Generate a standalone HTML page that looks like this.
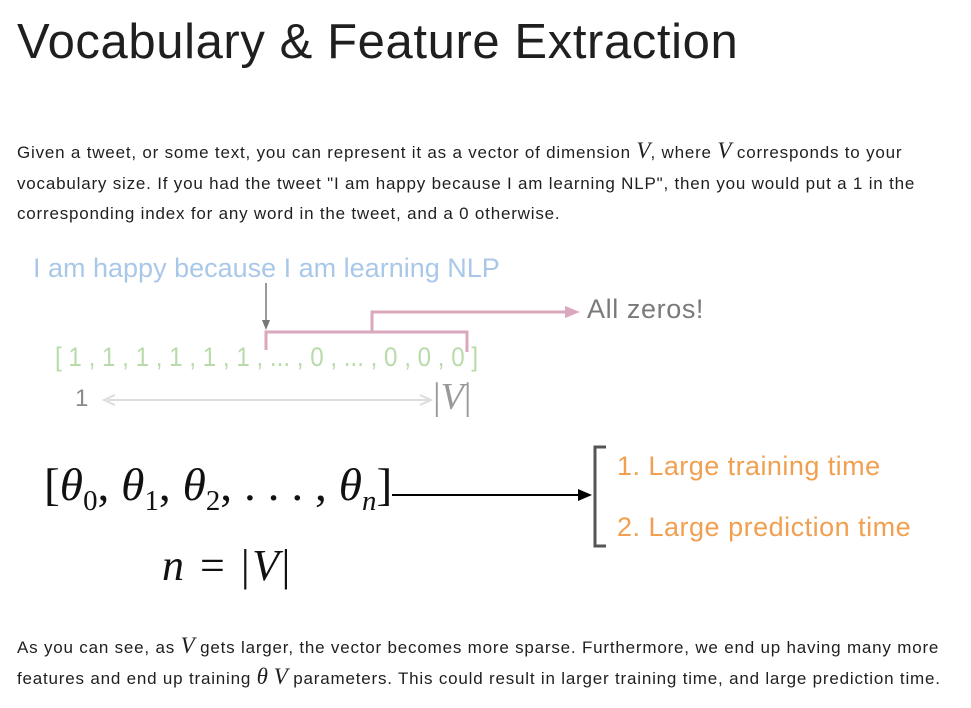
<!DOCTYPE html>
<html><head><meta charset="utf-8"><style>
body{margin:0;width:971px;height:708px;background:#fff;position:relative;overflow:hidden;font-family:"Liberation Sans",sans-serif;color:#1f1f1f}
.a{position:absolute;white-space:nowrap}
h1{position:absolute;left:17px;top:14px;margin:0;font-weight:400;font-size:49px;color:#1f1f1f;letter-spacing:0.6px}
.p{position:absolute;left:17px;font-size:17px;letter-spacing:0.8px;line-height:30.5px;color:#1f1f1f}
i.m{font-family:"Liberation Serif",serif;font-size:23px;font-style:italic;line-height:0;letter-spacing:0}
.s{font-family:"Liberation Serif",serif}
</style></head><body>
<h1>Vocabulary &amp; Feature Extraction</h1>
<div class="p" style="top:138px">Given a tweet, or some text, you can represent it as a vector of dimension <i class="m">V</i>, where <i class="m">V</i> corresponds to your<br>vocabulary size. If you had the tweet "I am happy because I am learning NLP", then you would put a 1 in the<br>corresponding index for any word in the tweet, and a 0 otherwise.</div>

<div class="a" style="left:33px;top:253px;font-size:27px;color:#a9c8e8;letter-spacing:0px">I am happy because I am learning NLP</div>
<div class="a" style="left:587px;top:294px;font-size:27px;color:#7a7a7a;letter-spacing:0.6px">All zeros!</div>
<div class="a" style="left:55px;top:342px;font-size:27px;color:#b9dbaa;transform:scaleX(0.895);transform-origin:0 0">[ 1 , 1 , 1 , 1 , 1 , 1 , ... , 0 , ... , 0 , 0 , 0 ]</div>
<div class="a" style="left:75px;top:385px;font-size:24px;color:#8a8a8a">1</div>
<div class="a s" style="left:433px;top:375px;font-size:38px;color:#999"><span>|</span><i>V</i><span>|</span></div>
<svg class="a" style="left:0;top:0" width="971" height="708">
<line x1="266" y1="283" x2="266" y2="322" stroke="#777" stroke-width="1.5"/>
<path d="M262 320 L266 330 L270 320 Z" fill="#777"/>
<path d="M266 350 V332 H467 V352 M372 332 V312 H570" stroke="#dba7bd" stroke-width="3" fill="none"/>
<path d="M565 306 L580 312 L565 318 Z" fill="#dba7bd"/>
<line x1="108" y1="400" x2="428" y2="400" stroke="#ddd" stroke-width="2"/>
<path d="M115 395 L104 400 L115 405 M420 395 L431 400 L420 405" stroke="#ddd" stroke-width="2" fill="none"/>
<line x1="392" y1="495" x2="580" y2="495" stroke="#000" stroke-width="2"/>
<path d="M578 489 L592 495 L578 501 Z" fill="#000"/>
<path d="M606 447 H595 V546 H606" stroke="#555" stroke-width="3" fill="none"/>
</svg>
<div class="a s" style="left:44px;top:458px;font-size:46px;color:#111;transform:scaleX(1.03);transform-origin:0 0">[<i>θ</i><sub style="font-size:28px">0</sub>, <i>θ</i><sub style="font-size:28px">1</sub>, <i>θ</i><sub style="font-size:28px">2</sub>, . . . , <i>θ<sub style="font-size:28px">n</sub></i>]</div>
<div class="a s" style="left:162px;top:540px;font-size:44px;color:#111;letter-spacing:2.5px"><i>n</i> = |<i>V</i>|</div>
<div class="a" style="left:617px;top:451px;font-size:27px;color:#f0a050;letter-spacing:0.45px">1. Large training time</div>
<div class="a" style="left:617px;top:512px;font-size:27px;color:#f0a050;letter-spacing:0.5px">2. Large prediction time</div>

<div class="p" style="top:633px">As you can see, as <i class="m">V</i> gets larger, the vector becomes more sparse. Furthermore, we end up having many more<br>features and end up training <i class="m">θ V</i> parameters. This could result in larger training time, and large prediction time.</div>
</body></html>
